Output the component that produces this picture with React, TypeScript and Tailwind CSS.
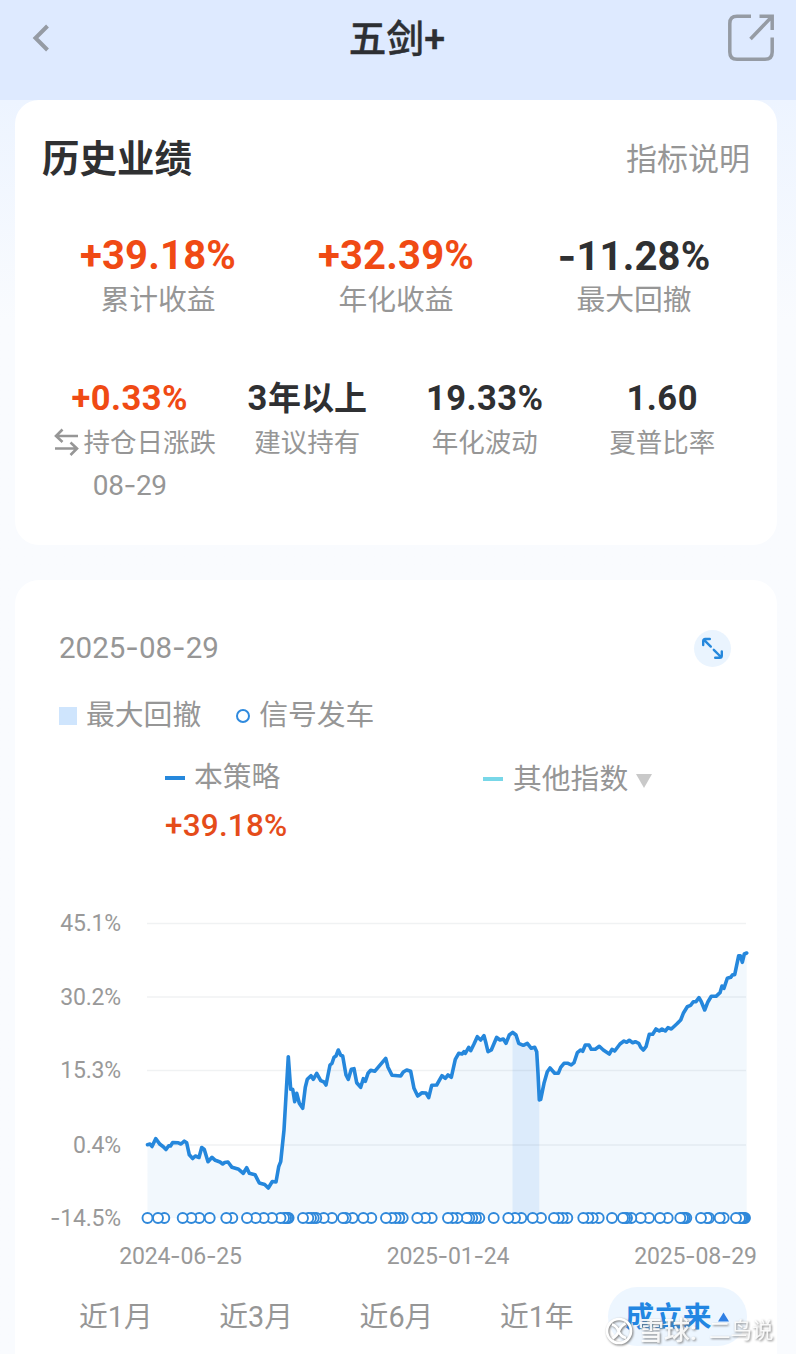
import { Fragment } from "react";
import { clsx } from "clsx";

const SUMMARY = [
  { value: "+39.18%", label: "累计收益", up: true },
  { value: "+32.39%", label: "年化收益", up: true },
  { value: "-11.28%", label: "最大回撤", up: false },
];

const DETAILS = [
  { value: "+0.33%", label: "持仓日涨跌", up: true, date: "08-29" },
  { value: "3年以上", label: "建议持有", up: false },
  { value: "19.33%", label: "年化波动", up: false },
  { value: "1.60", label: "夏普比率", up: false },
];

const RANGES = ["近1月", "近3月", "近6月", "近1年"];

const Y_TICKS = [
  { label: "45.1%", y: 923.5 },
  { label: "30.2%", y: 997 },
  { label: "15.3%", y: 1070.5 },
  { label: "0.4%", y: 1145 },
  { label: "-14.5%", y: 1218 },
];

const X_TICKS = [
  { label: "2024-06-25", x: 180.5 },
  { label: "2025-01-24", x: 448 },
  { label: "2025-08-29", x: 695.5 },
];

const LINE =
  "147.5,1144.7 150,1144 152,1146.5 155.7,1138.7 160,1144.3 163.3,1146.7 166,1149.5 168.7,1145.8 170.5,1146 172.7,1142.5 178.3,1142.8 181,1144 184.3,1141.2 186.7,1142.8 189.3,1154.8 192.7,1158.5 195.3,1156 199,1157.5 201.7,1147.5 204.3,1149.5 208,1161.7 212,1157.3 215.3,1160.3 220,1162 222.7,1164 224.7,1162.5 228,1162 232,1167.3 238.7,1169.3 243.3,1173.3 246.7,1167.7 249.3,1173.3 255,1174.7 259.3,1183 264.7,1184.5 268.3,1188 272.3,1181.5 276,1182 278.7,1166.7 280.7,1161.7 284,1130 288.3,1056.7 290.7,1089.3 292.7,1089.3 294.7,1101.7 296.7,1093.3 299.3,1103.3 302.7,1108.3 305.3,1087.3 307.3,1079.3 311,1075.7 313.3,1079.3 316.7,1073.3 320.7,1080.7 324,1082 326,1085 330,1065 332,1063.3 334,1057.3 336,1056 338.3,1050 340.7,1055.3 342.7,1056 346,1075 348.3,1079.3 351.3,1069.3 354,1068.7 356.7,1082.7 360.7,1087.3 363.3,1078.7 365.3,1081.3 368,1073.3 370.7,1070.3 374.7,1071.3 385.7,1058.3 388,1067.3 392,1075.3 400.7,1076 403.3,1072 406.7,1070 410.7,1071.3 414,1088.3 417.7,1096 422,1092.7 426,1093 428.7,1097.7 431.7,1085.3 436.7,1085 442,1075.7 445.3,1078.3 448,1075 451.3,1077.3 455.3,1059.3 458.7,1053.3 462,1054 464,1051.7 465.3,1053.3 468.7,1047.3 470.7,1050.7 474,1044 477.3,1036.7 480.7,1040 484,1035.7 486,1043.3 488,1051.7 491.3,1050 496.7,1037.3 500,1040 503.3,1039 506,1043.3 509.3,1035 512.7,1032.3 516,1035 518.7,1043.3 523.3,1045.3 527.3,1043.3 531.3,1048.3 534.7,1047.3 536.7,1051.7 538,1073.3 539.3,1100 540.7,1099.3 544,1083.3 547.3,1071.7 550,1068 554.7,1073.3 558.3,1073.3 560.7,1067.3 564,1063.3 568,1063.3 571.3,1065 574,1062.7 577.3,1052.7 580.7,1050 582.7,1051.3 585.3,1045 589,1045 591.3,1049.3 595.3,1049.3 599.3,1046.3 603.3,1050 609.3,1054 612,1049.3 614.7,1051 620,1044 624,1041 626.7,1042.3 629.3,1040.3 632.7,1042.7 635.3,1041.7 638.7,1043.3 640.7,1047.3 643.3,1050 646,1046.7 649.3,1034.3 652.7,1034.3 656,1029 659.3,1031 662,1029 665.3,1031 668,1027.7 671.3,1029 676.7,1024 680.7,1020 683.3,1013.3 687.3,1006.7 690.7,1005.3 693.3,1001.7 696,1001.7 699,997.7 701.3,1001.7 704.7,1010 708,1001.7 711.3,996.3 716,996.3 720,992.7 722,986 724,988.3 727.3,978.3 730.7,977.3 732.7,974.7 734.7,974.7 738.7,955.7 740.3,955.7 742.3,962.3 744.3,954 746.7,953";

const DRAWDOWN =
  "512.5,1218 512.5,1032.3 516,1035 518.7,1043.3 523.3,1045.3 527.3,1043.3 531.3,1048.3 534.7,1047.3 536.7,1051.7 538,1073.3 539.3,1100 539.3,1218";

const SIGNALS = [
  147.5, 158, 164.3, 182.7, 191.3, 199.3, 209.7, 226.3, 232.3, 247, 255.7, 263.7, 272, 280.5, 284,
  286, 287.5, 288.6, 303, 308.3, 311, 313.7, 316.3, 323.7, 332, 343, 345.7, 352.7, 363.3, 371.3, 386,
  391.7, 395.7, 399.3, 402.7, 417.3, 425, 431.7, 448, 452.7, 457.3, 466.7, 469.3, 472.3, 476, 479.3,
  493.7, 508.3, 515, 521.3, 532.7, 541, 554, 558.7, 562.7, 567.3, 583.3, 588.3, 592.7, 598.7, 612,
  623, 625, 627, 631.3, 640.7, 649, 660, 667.7, 680.3, 683, 684.6, 686.3, 701, 707, 709, 719.7,
  723.7, 736, 740, 741.5, 742.6, 743.8, 745,
];

export default function App() {
  return (
    <div className="h-[1354px] w-[796px] overflow-hidden bg-[#f9fbfe] font-['Roboto','Noto_Sans_CJK_SC',sans-serif] text-[#969696]">
      <Header />
      <main className="bg-linear-to-b from-[#edf4ff] to-[#f9fbfe] to-[220px] px-[15px] pr-[19px]">
        <Performance />
        <ChartCard />
      </main>
      <Watermark />
    </div>
  );
}

function Header() {
  return (
    <header className="flex h-[100px] items-start justify-between bg-[#deeaff] pr-5 pl-7">
      <svg className="mt-[22px] h-8 w-10" viewBox="28 22 40 32" fill="none">
        <path d="M47.5 26 L35.5 38 L47.5 50" stroke="#959ba4" strokeWidth="4" />
      </svg>
      <h1 className="mt-[12px] text-[37.5px] leading-[54px] font-medium tracking-[0.3px] text-[#2d2f33] [-webkit-text-stroke:0.4px_#2d2f33]">
        五剑+
      </h1>
      <svg className="mt-3 h-13 w-[50px]" viewBox="726 12 50 52" fill="none" stroke="#959ba4" strokeWidth="3.5">
        <path d="M751 16.3 H737 Q729.8 16.3 729.8 23.5 V52 Q729.8 59.3 737 59.3 H765 Q772.2 59.3 772.2 52 V37.5" />
        <path d="M759.5 16.3 H772.2 V30 M771.5 17 L750.5 39" />
      </svg>
    </header>
  );
}

function Performance() {
  return (
    <section className="h-[445px] rounded-[24px] bg-white pt-[21px]">
      <div className="flex h-[76px] items-center justify-between px-[27px]">
        <h2 className="text-[37.5px] leading-[56px] font-bold text-[#2f3032]">历史业绩</h2>
        <span className="mt-[2px] text-[31px] leading-[46px]">指标说明</span>
      </div>
      <div className="mx-6 mt-[37px] grid grid-cols-3">
        {SUMMARY.map((s) => (
          <div key={s.label} className="flex flex-col items-center whitespace-nowrap">
            <b
              className={clsx(
                "h-11 text-[40px] leading-[44px] font-bold tracking-[0.2px]",
                s.up ? "text-[#f04a14]" : "text-[#2f3032]",
              )}
            >
              <Num>{s.value}</Num>
            </b>
            <span className="h-[43px] pt-px text-[28.8px] leading-[43px]">{s.label}</span>
          </div>
        ))}
      </div>
      <div className="mx-[26px] mt-[55px] grid grid-cols-4">
        {DETAILS.map((s) => (
          <div key={s.label} className="flex flex-col items-center whitespace-nowrap">
            <b
              className={clsx(
                "h-11 text-[34.5px] leading-[44px] font-bold tracking-[0.5px]",
                s.up ? "text-[#f04a14]" : "text-[#2f3032]",
              )}
            >
              {s.value.endsWith("上") ? (
                <>
                  3<span className="text-[33px] tracking-normal">年以上</span>
                </>
              ) : (
                s.value
              )}
            </b>
            <span className={clsx("flex h-[43px] items-center pt-px text-[26.5px] leading-[43px]", s.date && "pl-[10px]")}>
              {s.date && <SwapIcon />}
              {s.label}
            </span>
            {s.date && (
              <span className="h-11 text-[28px] leading-[44px] tracking-[-0.4px]">
                <Num>{s.date}</Num>
              </span>
            )}
          </div>
        ))}
      </div>
    </section>
  );
}

function ChartCard() {
  return (
    <section className="mt-[35px] h-[800px] rounded-t-[24px] bg-white pt-[46px]">
      <div className="flex h-11 items-center justify-between pr-[46px] pl-11">
        <span className="-mt-[2px] text-[29.5px] leading-[44px]">
          <Num>2025-08-29</Num>
        </span>
        <span className="flex size-[37px] items-center justify-center rounded-full bg-[#eaf4fe]">
          <svg className="size-[23px]" viewBox="0 0 23 23" fill="none" stroke="#2688dc" strokeWidth="2.4" strokeLinecap="round" strokeLinejoin="round">
            <path d="M9.8 9.6 L3 2.8 M2.2 8 V4 Q2.2 2 4.2 2 H8.8" />
            <path d="M12.8 12.8 L20 20 M20.8 14.5 V18.5 Q20.8 20.8 18.5 20.8 H14.2" />
          </svg>
        </span>
      </div>

      <div className="mt-[23px] flex h-11 items-center pl-11 text-[28.8px] leading-[44px]">
        <i className="mt-px mr-[9px] size-[18px] bg-[#cfe5fd]" />
        最大回撤
        <i className="mt-[2px] mr-[9px] ml-[35px] size-[14px] rounded-full border-2 border-[#2f8ade]" />
        信号发车
      </div>

      <div className="mt-[18px] flex pl-[150px] text-[28.8px] leading-[44px]">
        <div className="w-[318px]">
          <div className="flex h-11 items-center">
            <i className="mt-px mr-[9px] h-1 w-5 bg-[#2688dc]" />
            本策略
          </div>
          <div className="mt-1 text-[31.5px] leading-[46px] font-medium tracking-[0.2px] text-[#e54c1a]">
            +39.18%
          </div>
        </div>
        <div className="mt-px flex h-[46px] items-center">
          <i className="mr-[10px] h-1 w-5 bg-[#78d7e8]" />
          其他指数
          <svg className="mt-1 ml-2 h-[14px] w-4" viewBox="0 0 16 14">
            <path d="M0 0 H16 L8 14 Z" fill="#c9c9c9" />
          </svg>
        </div>
      </div>

      <Chart />

      <div className="flex items-center pl-[64px] text-[28.8px] leading-[44px]">
        {RANGES.map((r) => (
          <span key={r} className="w-[140.3px]">
            {r}
          </span>
        ))}
        <span className="-ml-8 flex h-[59px] w-[139px] items-center rounded-full bg-[#edf6ff] pl-[17px] font-bold text-[#2286e2]">
          成立来
          <svg className="ml-[6px] h-[10px] w-[11px]" viewBox="0 0 12 10">
            <path d="M6 0 L12 10 H0 Z" fill="#2f7fe4" />
          </svg>
        </span>
      </div>
    </section>
  );
}

function Chart() {
  return (
    <svg className="mt-[51px] block h-[387px] w-[762px]" viewBox="15 900 762 387" fill="none">
      <polygon points={`147.5,1218 ${LINE} 746.7,1218`} fill="#f2f8fd" />
      <polygon points={DRAWDOWN} fill="#dcebfb" />
      {Y_TICKS.slice(0, 4).map((t) => (
        <line key={t.label} x1="147" x2="746" y1={t.y} y2={t.y} stroke="#5a6a7a" strokeOpacity="0.09" strokeWidth="1.6" />
      ))}
      <polyline points={LINE} stroke="#2587dc" strokeWidth="3.6" strokeLinejoin="round" strokeLinecap="round" />
      {[...SIGNALS].reverse().map((x, i) => (
        <circle key={i} cx={x} cy="1218" r="5" fill="#fff" stroke="#2f88da" strokeWidth="1.9" />
      ))}
      <g fill="#999" fontSize="23">
        {Y_TICKS.map((t) => (
          <text key={t.label} x="121" y={t.y + 7.5} textAnchor="end" letterSpacing="-0.2">
            <SvgNum>{t.label}</SvgNum>
          </text>
        ))}
        {X_TICKS.map((t) => (
          <text key={t.label} x={t.x} y="1263.5" textAnchor="middle" letterSpacing="-0.2">
            <SvgNum>{t.label}</SvgNum>
          </text>
        ))}
      </g>
    </svg>
  );
}

// Roboto's hyphen is too short next to its figures, so Inter draws it
function Num({ children }: { children: string }) {
  return (
    <>
      {children.split("-").map((part, i) => (
        <Fragment key={i}>
          {i > 0 && <span className="font-['Inter']">-</span>}
          {part}
        </Fragment>
      ))}
    </>
  );
}

function SvgNum({ children }: { children: string }) {
  return (
    <>
      {children.split("-").map((part, i) => (
        <Fragment key={i}>
          {i > 0 && <tspan className="font-['Inter']">-</tspan>}
          {part}
        </Fragment>
      ))}
    </>
  );
}

function SwapIcon() {
  return (
    <svg className="mr-[5px] h-7 w-[25px]" viewBox="0 0 25 28" fill="none" stroke="#969696" strokeWidth="2.6">
      <path d="M24 8 H2 M8.5 1.5 L2 8 L8.5 14" />
      <path d="M1 20.5 H23 M16.5 14.5 L23 20.5 L16.5 27" />
    </svg>
  );
}

function Watermark() {
  return (
    <div className="absolute top-[1310px] left-[605px] flex h-[42px] items-center text-white/90 [filter:drop-shadow(1px_1px_1px_#777)]">
      <svg className="mr-[5px] size-7" viewBox="0 0 28 28" fill="none" stroke="#fff" strokeWidth="2.6">
        <circle cx="14" cy="14" r="12" />
        <path d="M7 7.5 Q12 9 13.5 14 Q15.5 19.5 21 21 M20.5 6.5 Q15.5 9 14 14 Q12 19 7.5 21.5" />
      </svg>
      <span className="w-[71px] text-[26px] leading-[42px] font-medium">雪球:</span>
      <span className="text-[21.5px] leading-[42px]">二鸟说</span>
    </div>
  );
}
